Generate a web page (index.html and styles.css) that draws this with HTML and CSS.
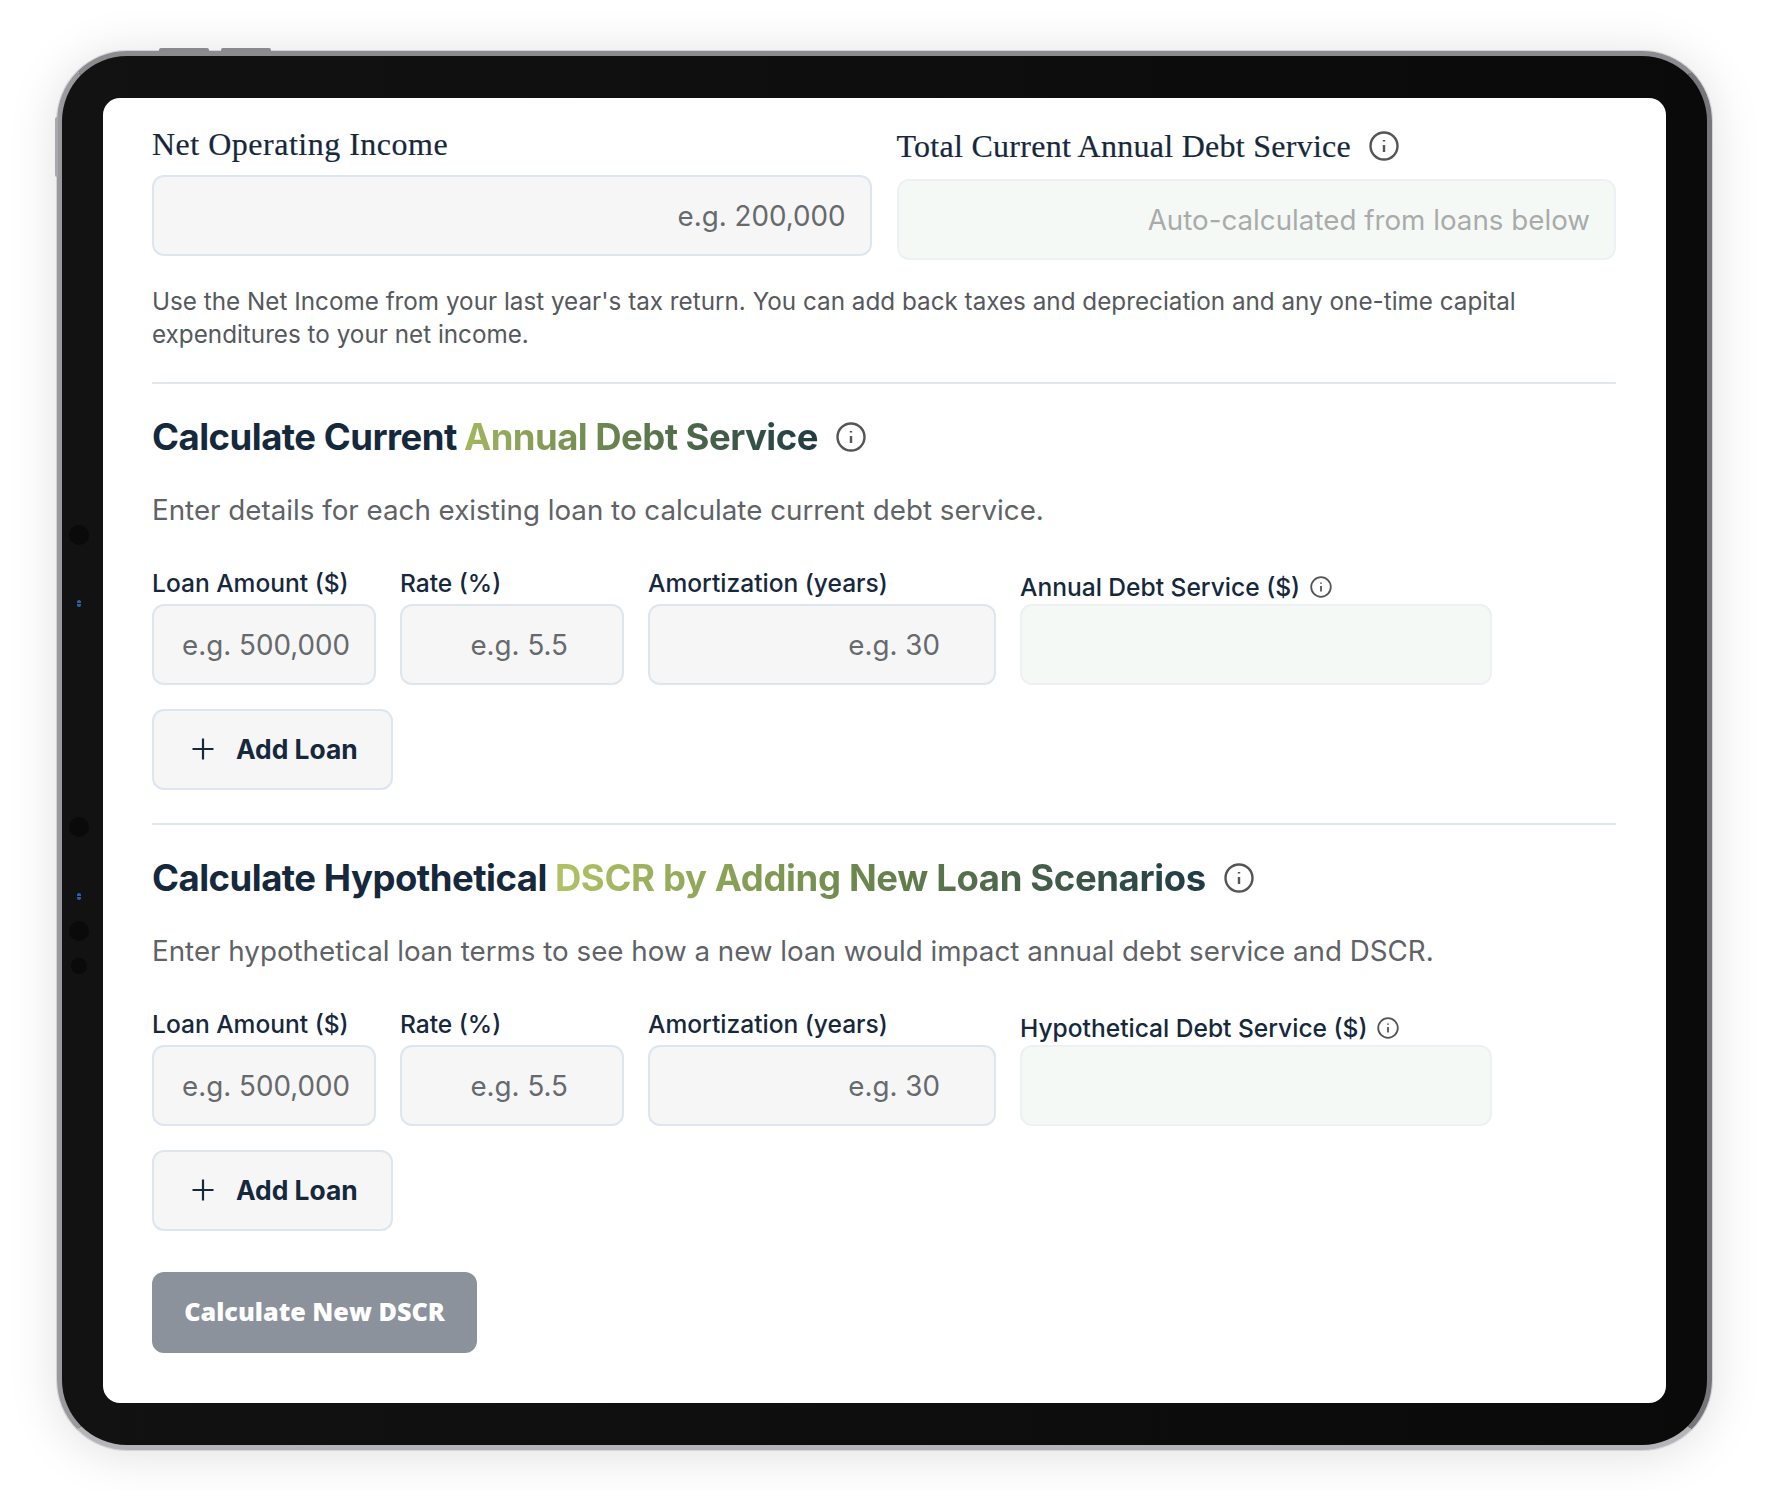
FILE: index.html
```html
<!DOCTYPE html>
<html lang="en">
<head>
<meta charset="utf-8">
<title>DSCR Calculator</title>
<link rel="stylesheet" href="styles.css">
</head>
<body>
<div class="page">
  <div class="device">
    <span class="btn-top btn-top-a"></span>
    <span class="btn-top btn-top-b"></span>
    <span class="btn-side"></span>
    <span class="cam cam-a"></span><span class="led led-a"></span>
    <span class="cam cam-b"></span><span class="led led-b"></span>
    <span class="cam cam-c"></span><span class="cam cam-d"></span>
    <main class="screen">
      <div class="top-row">
        <div class="field">
          <label class="serif-label serif-wide">Net Operating Income</label>
          <input class="input" placeholder="e.g. 200,000">
        </div>
        <div class="field">
          <label class="serif-label serif-tall">Total Current Annual Debt Service
            <svg class="info info-lg" viewBox="0 0 30 30"><circle cx="15" cy="15" r="13.5"/><path d="M15 14v7M15 9v1.4"/></svg>
          </label>
          <input class="input input-calc input-muted" placeholder="Auto-calculated from loans below" disabled>
        </div>
      </div>
      <p class="help">Use the Net Income from your last year's tax return. You can add back taxes and depreciation and any one-time capital expenditures to your net income.</p>

      <section class="section">
        <h2 class="title">Calculate Current <span class="grad grad-a">Annual Debt Service</span>
          <svg class="info info-lg" viewBox="0 0 30 30"><circle cx="15" cy="15" r="13.5"/><path d="M15 14v7M15 9v1.4"/></svg>
        </h2>
        <p class="sub">Enter details for each existing loan to calculate current debt service.</p>
        <div class="loan-row">
          <div class="field"><label class="label">Loan Amount ($)</label><input class="input" placeholder="e.g. 500,000"></div>
          <div class="field"><label class="label">Rate (%)</label><input class="input input-spin" placeholder="e.g. 5.5"></div>
          <div class="field"><label class="label">Amortization (years)</label><input class="input input-spin" placeholder="e.g. 30"></div>
          <div class="field"><label class="label label-icon">Annual Debt Service ($)
            <svg class="info info-sm" viewBox="0 0 22 22"><circle cx="11" cy="11" r="9.800"/><path d="M11 10v5.500M11 6.500v1.200"/></svg>
          </label><input class="input input-calc" disabled></div>
        </div>
        <button class="add-btn" type="button">
          <svg class="plus" viewBox="0 0 24 24"><path d="M12 1.500v21M1.500 12h21"/></svg>Add Loan
        </button>
      </section>

      <section class="section section-last">
        <h2 class="title">Calculate Hypothetical <span class="grad grad-b">DSCR by Adding New Loan Scenarios</span>
          <svg class="info info-lg" viewBox="0 0 30 30"><circle cx="15" cy="15" r="13.5"/><path d="M15 14v7M15 9v1.4"/></svg>
        </h2>
        <p class="sub">Enter hypothetical loan terms to see how a new loan would impact annual debt service and DSCR.</p>
        <div class="loan-row">
          <div class="field"><label class="label">Loan Amount ($)</label><input class="input" placeholder="e.g. 500,000"></div>
          <div class="field"><label class="label">Rate (%)</label><input class="input input-spin" placeholder="e.g. 5.5"></div>
          <div class="field"><label class="label">Amortization (years)</label><input class="input input-spin" placeholder="e.g. 30"></div>
          <div class="field"><label class="label label-icon">Hypothetical Debt Service ($)
            <svg class="info info-sm" viewBox="0 0 22 22"><circle cx="11" cy="11" r="9.800"/><path d="M11 10v5.500M11 6.500v1.200"/></svg>
          </label><input class="input input-calc" disabled></div>
        </div>
        <button class="add-btn" type="button">
          <svg class="plus" viewBox="0 0 24 24"><path d="M12 1.500v21M1.500 12h21"/></svg>Add Loan
        </button>
      </section>

      <button class="calc-btn" type="button">Calculate New DSCR</button>
    </main>
  </div>
</div>
</body>
</html>
```
FILE: styles.css
```css
* { box-sizing: border-box; }
html, body { margin: 0; background: #fff; }
body { font-family: Inter, "Liberation Sans", sans-serif; color: #16283c; }

.page { padding: 51px 53px 40px 57px; }

.device {
  position: relative;
  width: 1655px;
  padding: 42px 41px 42px 41px;
  border: 5px solid #77777b;
  border-top-color: #8c8c90;
  border-left-color: #9a9a9e;
  border-bottom-color: #b4b4b9;
  border-radius: 70px;
  background: linear-gradient(90deg, #121212 0%, #0a0a0a 100%);
  box-shadow: 0 0 0 1px #d4d4d7, 0 4px 50px rgba(0, 0, 0, .13);
}

.btn-top { position: absolute; top: -8px; width: 50px; height: 3px; background: #8a8a8e; border-radius: 2px 2px 0 0; }
.btn-top-a { left: 97px; }
.btn-top-b { left: 159px; }
.btn-side { position: absolute; left: -7px; top: 61px; width: 3px; height: 60px; background: #a9a9ad; border-radius: 2px 0 0 2px; }

.cam { position: absolute; border-radius: 50%; background: #0a0a0a; }
.cam-a { left: 7px; top: 469px; width: 20px; height: 20px; }
.cam-b { left: 7px; top: 761px; width: 20px; height: 20px; }
.cam-c { left: 7px; top: 865px; width: 20px; height: 20px; }
.cam-d { left: 9px; top: 902px; width: 16px; height: 16px; }
.led { position: absolute; left: 15px; width: 4px; height: 7px; background: repeating-linear-gradient(180deg, #2c62a8 0 3px, #111 3px 4px); border-radius: 2px; }
.led-a { top: 544px; }
.led-b { top: 837px; }

.screen {
  background: #fff;
  border-radius: 17px;
  padding: 27px 50px 50px 49px;
}

.top-row { display: grid; grid-template-columns: 1fr 1fr; gap: 25px; align-items: start; }
.field { display: flex; flex-direction: column; min-width: 0; }

.serif-label {
  font-family: "Liberation Serif", serif;
  font-size: 32px;
  line-height: 38px;
  letter-spacing: .27px;
  -webkit-text-stroke: .2px #16283c;
  color: #16283c;
  margin-bottom: 12px;
  display: flex;
  align-items: center;
  gap: 18px;
}
.serif-wide { letter-spacing: .5px; }
.serif-tall { min-height: 42px; }

.input {
  width: 100%;
  height: 81px;
  padding: 0 24px 0 26px;
  border: 2px solid #dde6ee;
  border-radius: 12px;
  background: #f6f6f7;
  font: 400 27.75px Inter, "Liberation Sans", sans-serif;
  text-align: right;
  color: #16283c;
}
.input::placeholder { color: #666a6d; opacity: 1; }
.input-spin { padding-right: 54px; }
.input-calc { background: #f5f9f6; border-color: #edf1f4; }
.input-muted::placeholder { color: #a9abab; }

.help { margin: 25px 0 31px; font-size: 24.25px; line-height: 33px; color: #55595d; padding-right: 60px; }

.section { padding-top: 29px; border-top: 2px solid #e0e8ec; padding-bottom: 33px; }
.section-last { padding-bottom: 0; }

.title {
  margin: 0;
  font-size: 36.5px;
  line-height: 48px;
  font-weight: 700;
  letter-spacing: -.5px;
  color: #16283c;
  display: flex;
  align-items: center;
  gap: 8px;
}
.title .info { margin-left: 10px; }
.grad { background-clip: text; -webkit-background-clip: text; color: transparent; }
.grad-a { margin-left: -1px; letter-spacing: -.55px; background-image: linear-gradient(90deg, #a3b75f 0%, #5e7a4c 50%, #1f3a45 100%); }
.grad-b { letter-spacing: -.37px; background-image: linear-gradient(90deg, #b2c265 0%, #76914f 40%, #1f3a45 100%); }

.sub { margin: 29px 0 0; font-size: 27.75px; line-height: 40px; color: #5f6367; }

.loan-row {
  margin-top: 36px;
  display: grid;
  grid-template-columns: 224px 224px 348px 472px;
  gap: 24px;
  align-items: end;
}
.label {
  font-size: 24.55px;
  line-height: 34px;
  font-weight: 500;
  color: #16283c;
  margin-bottom: 4px;
  display: flex;
  align-items: center;
  gap: 10px;
}
.label-icon { line-height: 26px; }

.add-btn {
  display: flex;
  align-items: center;
  gap: 21px;
  margin-top: 24px;
  height: 81px;
  width: 241px;
  padding: 0 0 2px 37px;
  border: 2px solid #dde6ee;
  border-radius: 12px;
  background: #f6f6f7;
  font: 700 26.4px Inter, "Liberation Sans", sans-serif;
  color: #16283c;
}
.plus { width: 24px; height: 24px; fill: none; stroke: #16283c; stroke-width: 2.2; }

.calc-btn {
  display: block;
  margin-top: 41px;
  width: 325px;
  height: 81px;
  padding: 0 0 4px;
  border: 0;
  border-radius: 12px;
  background: #8b929c;
  color: #fff;
  font: 800 25.2px "Open Sans", "Liberation Sans", sans-serif;
}

.info { fill: none; stroke: #555; flex: none; }
.info-lg { width: 30px; height: 30px; stroke-width: 2.4; }
.info-sm { width: 22px; height: 22px; stroke-width: 1.8; }
```
